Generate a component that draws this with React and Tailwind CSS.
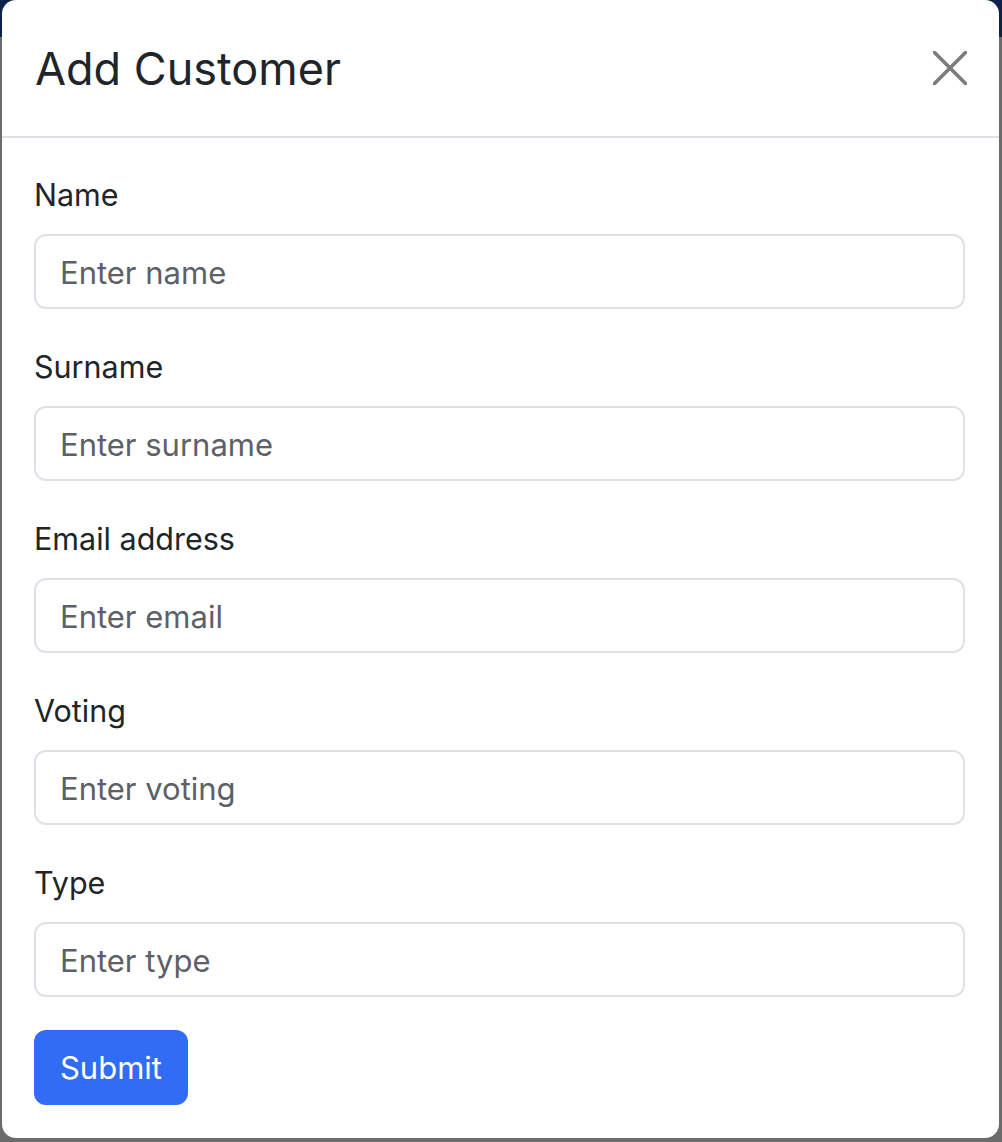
import React from "react";

const fields = [
    { label: "Name", placeholder: "Enter name" },
    { label: "Surname", placeholder: "Enter surname" },
    { label: "Email address", placeholder: "Enter email" },
    { label: "Voting", placeholder: "Enter voting" },
    { label: "Type", placeholder: "Enter type" },
];

const App = () => {
    return (
        <div className="relative w-[1002px] h-[1142px] bg-[#6b6b6b] overflow-hidden font-['Inter',sans-serif]">
            {/* dimmed navbar behind the modal */}
            <div className="absolute top-0 left-0 right-0 h-[37px] bg-[#0c2249]"></div>

            <div className="relative z-10 ml-[2px] w-[997px] h-[1138px] rounded-[14px] bg-white flex flex-col">
                {/* Header */}
                <div className="h-[138px] shrink-0 border-b-2 border-[#dee2e6] flex items-center justify-between pl-[33px] pr-[32px]">
                    <h5 className="text-[45px] leading-[54px] text-[#212529] font-normal mt-[2px]">Add Customer</h5>
                    <button className="w-[34px] h-[34px] flex items-center justify-center">
                        <svg width="34" height="34" viewBox="0 0 34 34" fill="none">
                            <path d="M1.5 1.5L32.5 32.5M32.5 1.5L1.5 32.5" stroke="#7b7b7b" strokeWidth="3.6" strokeLinecap="round" />
                        </svg>
                    </button>
                </div>

                {/* Body */}
                <form className="flex flex-col pt-[35px] px-[32px]" onSubmit={(e) => e.preventDefault()}>
                    <div className="flex flex-col gap-[36px]">
                        {fields.map((f) => (
                            <div key={f.label} className="flex flex-col">
                                <label className="text-[30.5px] leading-[44px] h-[44px] text-[#212529] mb-[17px]">{f.label}</label>
                                <input
                                    type="text"
                                    placeholder={f.placeholder}
                                    className="h-[75px] w-[931px] border-2 border-[#dee2e6] rounded-[12px] px-[24px] pt-[2px] text-[31px] text-[#212529] placeholder:text-[#5c6167] outline-none"
                                />
                            </div>
                        ))}
                    </div>
                    <button
                        type="submit"
                        className="mt-[33px] w-[154px] h-[75px] rounded-[12px] bg-[#316cf4] text-white text-[31px] leading-none"
                    >
                        Submit
                    </button>
                </form>
            </div>
        </div>
    );
};

export default App;
